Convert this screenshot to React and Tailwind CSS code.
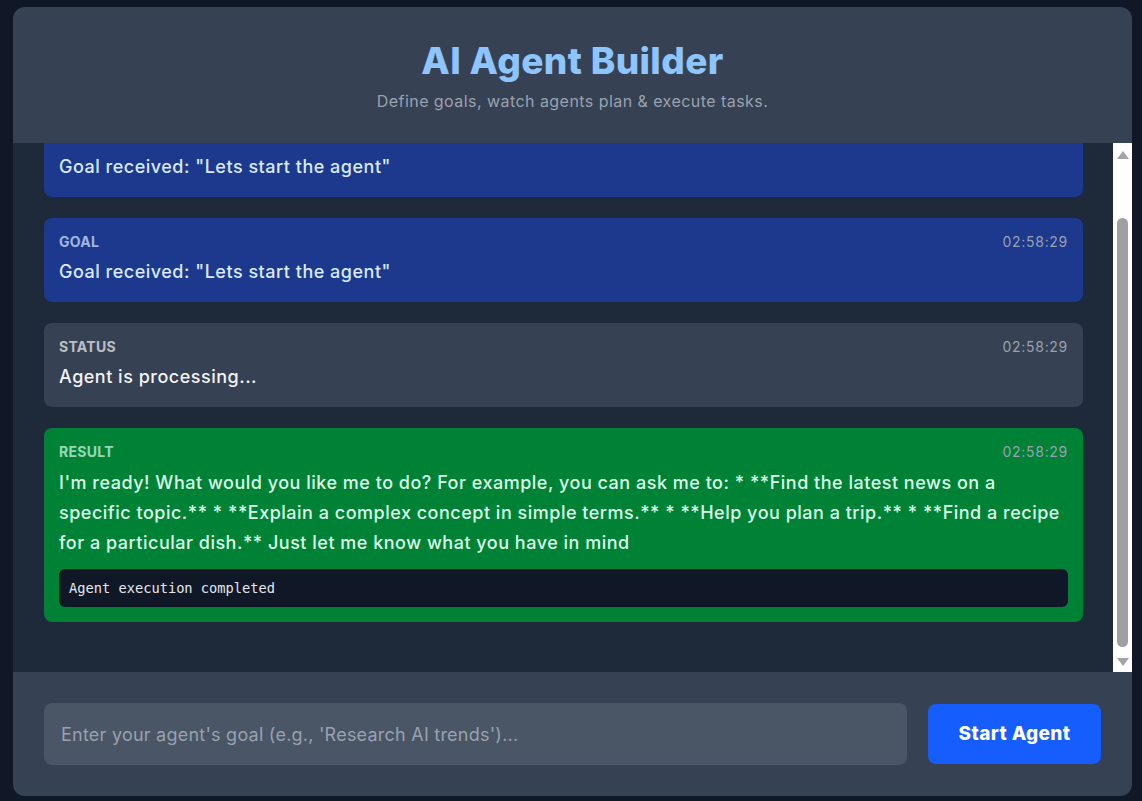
import React, { useLayoutEffect, useRef } from "react";

const messages = [
  { type: "GOAL", time: "02:58:29", text: 'Goal received: "Lets start the agent"', tone: "blue" },
  { type: "GOAL", time: "02:58:29", text: 'Goal received: "Lets start the agent"', tone: "blue" },
  { type: "STATUS", time: "02:58:29", text: "Agent is processing...", tone: "gray" },
  {
    type: "RESULT",
    time: "02:58:29",
    text: "I'm ready! What would you like me to do? For example, you can ask me to: * **Find the latest news on a specific topic.** * **Explain a complex concept in simple terms.** * **Help you plan a trip.** * **Find a recipe for a particular dish.** Just let me know what you have in mind",
    tone: "green",
    log: "Agent execution completed",
  },
];

const toneCls = {
  blue: "bg-blue-900 text-blue-100",
  gray: "bg-gray-700 text-gray-100",
  green: "bg-green-700 text-green-100",
};

function Message({ m }) {
  return (
    <div className={`rounded-lg px-[15px] pt-4 ${m.log ? "pb-[15px]" : "pb-4"} ${toneCls[m.tone]}`}>
      <div className="flex items-center justify-between mb-2">
        <span className="text-sm leading-4 font-bold uppercase tracking-[0.02em] opacity-70">{m.type}</span>
        <span className="text-sm leading-4 tracking-[0.05em] text-gray-400">{m.time}</span>
      </div>
      <div className={`text-lg font-medium tracking-[0.028em] ${m.log ? "leading-[30px]" : "leading-7"}`}>{m.text}</div>
      {m.log && (
        <pre
          className="mt-[11px] rounded-md bg-gray-900 px-2.5 py-[9px] text-[13.7px] leading-5 text-gray-200"
          style={{ fontFamily: '"DejaVu Sans Mono", "Liberation Mono", monospace' }}
        >
          {m.log}
        </pre>
      )}
    </div>
  );
}

function Scrollbar() {
  return (
    <div className="w-[19px] shrink-0 bg-white flex flex-col items-center">
      <svg className="mt-[8px]" width="12" height="8" viewBox="0 0 12 8">
        <path d="M6 0 L12 8 L0 8 Z" fill="#a3a3a3" />
      </svg>
      <div className="mt-[59px] h-[429px] w-[11px] rounded-full bg-[#a0a0a0]" />
      <svg className="mt-[11px]" width="12" height="8" viewBox="0 0 12 8">
        <path d="M0 0 L12 0 L6 8 Z" fill="#a3a3a3" />
      </svg>
    </div>
  );
}

export default function App() {
  const ref = useRef(null);
  useLayoutEffect(() => {
    if (ref.current) ref.current.scrollTop = ref.current.scrollHeight;
  }, []);
  return (
    <div
      className="h-[801px] w-full bg-gray-900 pt-[7px]"
      style={{ fontFamily: 'Inter, "Noto Sans", sans-serif' }}
    >
      <div className="ml-[13px] w-[1119px] h-[789px] rounded-xl overflow-hidden flex flex-col bg-gray-800">
        <div className="h-[136px] shrink-0 bg-gray-700 flex flex-col items-center pt-[34px]">
          <h1 className="text-[37px] leading-10 font-extrabold text-blue-300 tracking-[0.01em]">AI Agent Builder</h1>
          <p className="mt-[8px] text-base leading-6 tracking-[0.028em] text-gray-400">
            Define goals, watch agents plan &amp; execute tasks.
          </p>
        </div>
        <div className="flex-1 min-h-0 flex bg-gray-800">
          <div ref={ref} className="flex-1 overflow-hidden">
            <div className="flex flex-col gap-[21px] pl-[31px] pr-[30px] pt-[31px] pb-[50px]">
              {messages.map((m, i) => (
                <Message key={i} m={m} />
              ))}
            </div>
          </div>
          <Scrollbar />
        </div>
        <div className="h-[124px] shrink-0 bg-gray-700 flex items-center gap-[21px] pl-[31px] pr-[31px]">
          <input
            className="flex-1 h-[62px] rounded-lg bg-gray-600 px-[17px] text-lg tracking-[0.013em] text-gray-100 placeholder-gray-400 outline-none"
            placeholder="Enter your agent's goal (e.g., 'Research AI trends')..."
          />
          <button className="w-[173px] h-[60px] rounded-lg bg-blue-600 text-white text-[19px] font-extrabold tracking-[0.02em]">
            Start Agent
          </button>
        </div>
      </div>
    </div>
  );
}
